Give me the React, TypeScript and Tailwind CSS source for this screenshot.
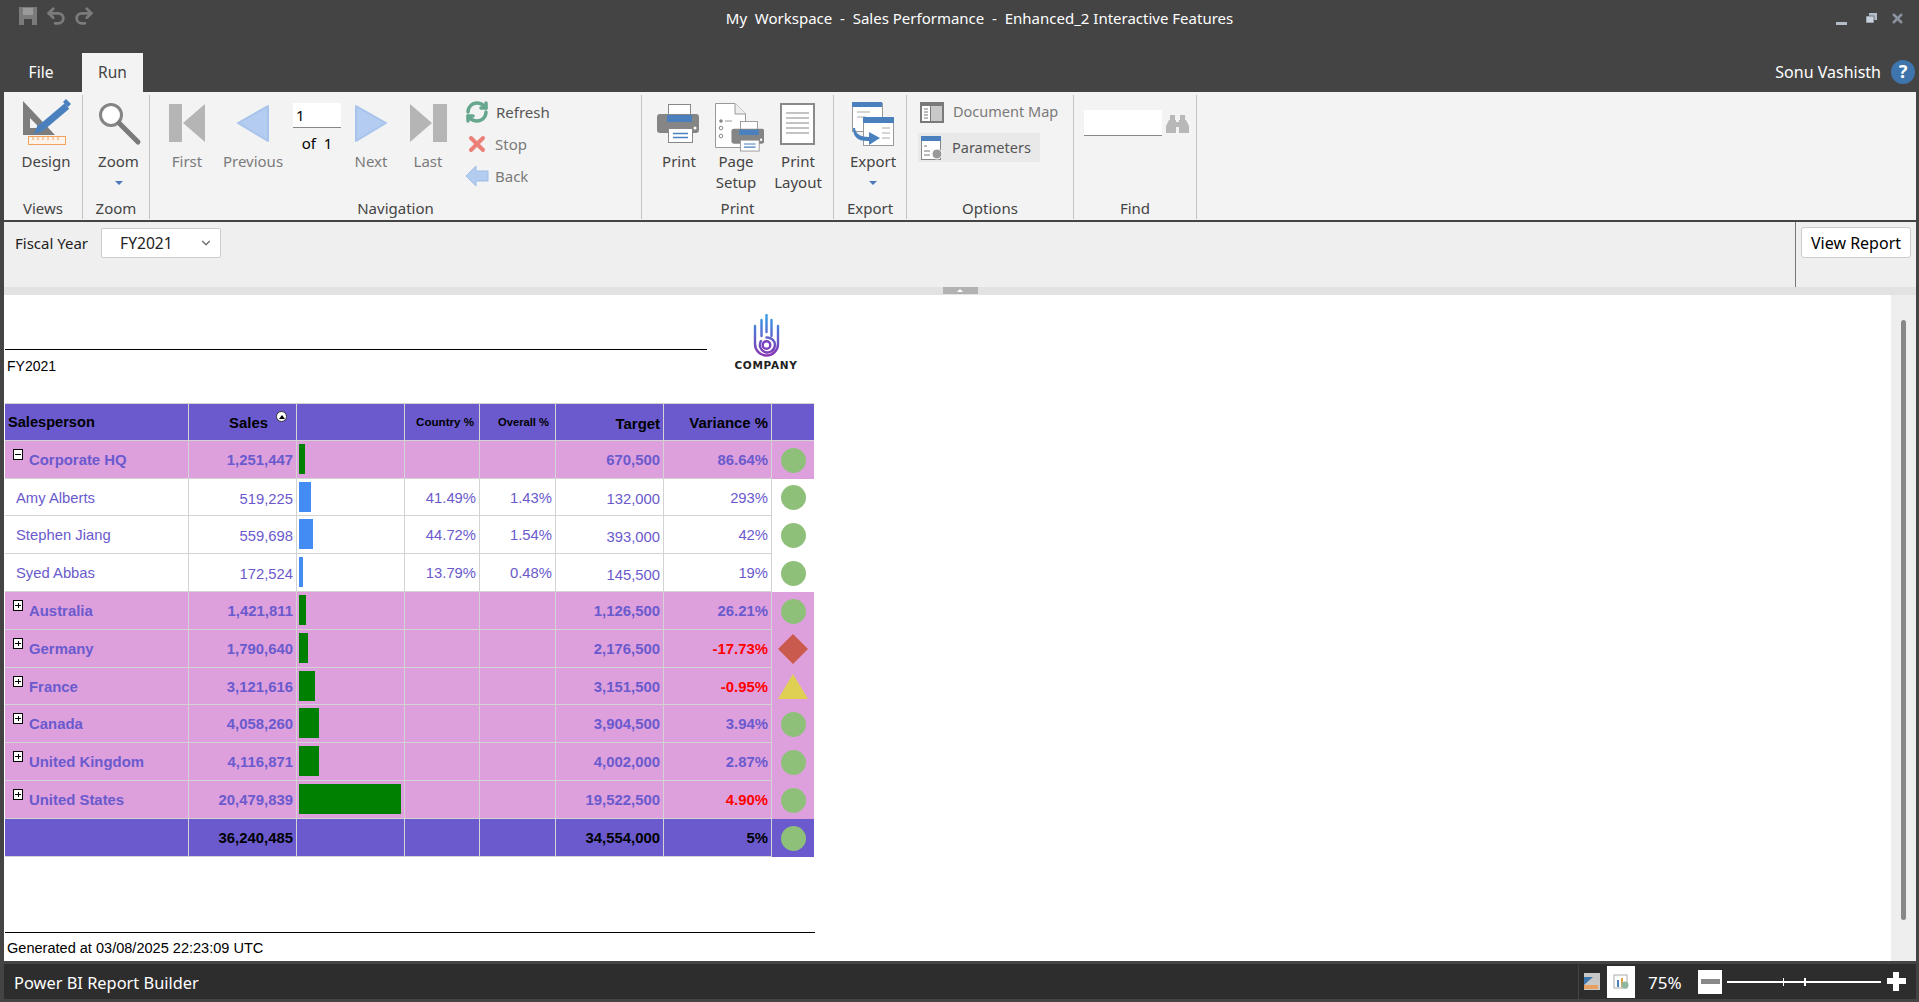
import React from "react";
import { RefreshCw, X, Undo2, Redo2, ChevronDown } from "lucide-react";

const blue = "#4a80bd";
const gridCols = "grid grid-cols-[184px_108px_108px_75px_76px_108px_108px_42px]";
const cell = "flex items-center justify-end pr-[3px] pt-[2px] border-r border-b border-[#d3d3d3]";

type Shape = "circle" | "diamond" | "triangle";
type Region = {
  name: string;
  sales: string;
  bar: number;
  target: string;
  variance: string;
  red?: boolean;
  shape: Shape;
  h: string;
};

const regions: Region[] = [
  { name: "Australia", sales: "1,421,811", bar: 7, target: "1,126,500", variance: "26.21%", shape: "circle", h: "h-[38px]" },
  { name: "Germany", sales: "1,790,640", bar: 9, target: "2,176,500", variance: "-17.73%", red: true, shape: "diamond", h: "h-[38px]" },
  { name: "France", sales: "3,121,616", bar: 16, target: "3,151,500", variance: "-0.95%", red: true, shape: "triangle", h: "h-[37px]" },
  { name: "Canada", sales: "4,058,260", bar: 20, target: "3,904,500", variance: "3.94%", shape: "circle", h: "h-[38px]" },
  { name: "United Kingdom", sales: "4,116,871", bar: 20, target: "4,002,000", variance: "2.87%", shape: "circle", h: "h-[38px]" },
  { name: "United States", sales: "20,479,839", bar: 102, target: "19,522,500", variance: "4.90%", red: true, shape: "circle", h: "h-[38px]" },
];

const people = [
  { name: "Amy Alberts", sales: "519,225", bar: 12, country: "41.49%", overall: "1.43%", target: "132,000", variance: "293%", h: "h-[37px]" },
  { name: "Stephen Jiang", sales: "559,698", bar: 14, country: "44.72%", overall: "1.54%", target: "393,000", variance: "42%", h: "h-[38px]" },
  { name: "Syed Abbas", sales: "172,524", bar: 4, country: "13.79%", overall: "0.48%", target: "145,500", variance: "19%", h: "h-[38px]" },
];

function Status({ shape }: { shape: Shape }) {
  if (shape === "circle") return <div className="w-[25px] h-[25px] rounded-full bg-[#8fc07a]" />;
  return (
    <svg width="30" height="30" viewBox="0 0 30 30">
      {shape === "diamond" ? (
        <polygon points="15,0 30,15 15,30 0,15" fill="#cb5a4e" />
      ) : (
        <polygon points="15,2 30,27 0,27" fill="#dfcf52" />
      )}
    </svg>
  );
}

function Bar({ width, color }: { width: number; color: string }) {
  return (
    <div className="flex items-start pl-[2px] pt-[3px] border-r border-b border-[#d3d3d3]">
      <div className={`h-[30px] ${color}`} style={{ width }} />
    </div>
  );
}

function TreeBox({ open }: { open?: boolean }) {
  return (
    <div className="relative w-[10px] h-[11px] mt-[8px] shrink-0 bg-white border border-black">
      <div className="absolute left-[1px] right-[1px] top-[4px] h-px bg-black" />
      {!open && <div className="absolute top-[2px] bottom-[2px] left-[3.5px] w-px bg-black" />}
    </div>
  );
}

function GroupRow({ r, open }: { r: Region; open?: boolean }) {
  return (
    <div className={`${gridCols} ${r.h} bg-[#dda0dd] font-bold text-[#6a5acd]`}>
      <div className="flex items-start pl-[8px] border-r border-b border-[#d3d3d3]">
        <TreeBox open={open} />
        <span className="ml-[6px] pt-[2px] self-center">{r.name}</span>
      </div>
      <div className={cell}>{r.sales}</div>
      <Bar width={r.bar} color="bg-[#008000]" />
      <div className={cell} />
      <div className={cell} />
      <div className={cell}>{r.target}</div>
      <div className={`${cell} ${r.red ? "text-[#ff0000]" : ""}`}>{r.variance}</div>
      <div className="flex items-center justify-center">
        <Status shape={r.shape} />
      </div>
    </div>
  );
}

function ReportTable() {
  return (
    <div className="w-[809px] text-[14.9px] font-['Liberation_Sans',sans-serif]">
      <div className={`${gridCols} h-[38px] bg-[#6a5acd] border-t border-[#d3d3d3] font-bold text-black`}>
        <div className="flex items-center pl-[3px] pt-[2px] border-r border-b border-[#d3d3d3] text-[14.6px]">Salesperson</div>
        <div className={`${cell} relative pr-[28px]`}>
          Sales
          <div className="absolute top-[7px] right-[9px] w-[11px] h-[11px] rounded-full bg-white border border-[#333] flex items-center justify-center">
            <div className="w-0 h-0 border-x-[3px] border-x-transparent border-b-[4px] border-b-black" />
          </div>
        </div>
        <div className={cell} />
        <div className="flex items-center justify-end pr-[5px] border-r border-b border-[#d3d3d3] text-[11.6px]">Country %</div>
        <div className="flex items-center justify-end pr-[6px] border-r border-b border-[#d3d3d3] text-[11.2px]">Overall %</div>
        <div className={`${cell} pt-[4px]`}>Target</div>
        <div className={cell}>Variance %</div>
        <div className="border-b border-[#d3d3d3]" />
      </div>

      <GroupRow
        open
        r={{ name: "Corporate HQ", sales: "1,251,447", bar: 6, target: "670,500", variance: "86.64%", shape: "circle", h: "h-[38px]" }}
      />

      {people.map((p) => (
        <div key={p.name} className={`${gridCols} ${p.h} bg-white text-[#6a5acd] text-[14.8px]`}>
          <div className="flex items-center pl-[11px] pt-[2px] border-r border-b border-[#d3d3d3]">{p.name}</div>
          <div className={`${cell} pt-[4px]`}>{p.sales}</div>
          <Bar width={p.bar} color="bg-[#428cf4]" />
          <div className={cell}>{p.country}</div>
          <div className={cell}>{p.overall}</div>
          <div className={`${cell} pt-[5px]`}>{p.target}</div>
          <div className={cell}>{p.variance}</div>
          <div className="flex items-center justify-center">
            <Status shape="circle" />
          </div>
        </div>
      ))}

      {regions.map((r) => (
        <GroupRow key={r.name} r={r} />
      ))}

      <div className={`${gridCols} h-[38px] bg-[#6a5acd] font-bold text-black`}>
        <div className={cell} />
        <div className={cell}>36,240,485</div>
        <div className={cell} />
        <div className={cell} />
        <div className={cell} />
        <div className={cell}>34,554,000</div>
        <div className={cell}>5%</div>
        <div className="flex items-center justify-center">
          <Status shape="circle" />
        </div>
      </div>
    </div>
  );
}

/* ribbon icons: all 58 high so the labels line up */
function DesignIcon() {
  return (
    <svg width="50" height="58" viewBox="0 0 50 58">
      <path d="M2 6 L34 40 H2 Z M9 23 V33 H19 Z" fill="#7d7d7d" fillRule="evenodd" />
      <path d="M46 11 L20 33" stroke={blue} strokeWidth="7" />
      <path d="M42 7 L45 4 L50 9 L47 12 Z" fill={blue} />
      <path d="M17 29 L22 36 L13 39 Z" fill={blue} />
      <rect x="7.5" y="41.5" width="37" height="8" fill="#fdf3e8" stroke="#f0a35e" />
      <path d="M12 42 V45 M17 42 V45 M22 42 V45 M27 42 V45 M32 42 V45 M37 42 V45" stroke="#f0a35e" />
    </svg>
  );
}

function ZoomIcon() {
  return (
    <svg width="50" height="58" viewBox="0 0 50 58">
      <circle cx="17" cy="20" r="10.5" fill="#fff" stroke="#858585" strokeWidth="3" />
      <path d="M25 28 L44 47" stroke="#7a7a7a" strokeWidth="5" strokeLinecap="round" />
    </svg>
  );
}

function PrinterParts() {
  return (
    <>
      <rect x="18.5" y="9.5" width="22" height="12" fill="#fff" stroke="#888" />
      <rect x="7" y="19" width="42" height="19" rx="3" fill="#858585" />
      <rect x="17" y="20" width="25" height="7" fill={blue} />
      <circle cx="45" cy="33" r="1.5" fill="#fff" />
      <rect x="18.5" y="33.5" width="24" height="14" fill="#fff" stroke="#888" />
      <path d="M23 38.5 H38 M23 42.5 H38" stroke={blue} strokeWidth="1.5" />
    </>
  );
}

function PrintIcon() {
  return (
    <svg width="58" height="58" viewBox="0 0 58 58">
      <PrinterParts />
    </svg>
  );
}

function PageSetupIcon() {
  return (
    <svg width="56" height="58" viewBox="0 0 56 58">
      <path d="M7.5 8.5 H27 L37.5 19 V52.5 H7.5 Z" fill="#fff" stroke="#999" />
      <path d="M27 8.5 V19 H37.5" fill="#eee" stroke="#999" />
      <circle cx="13" cy="26" r="1.8" fill="#888" />
      <path d="M17 26 H24" stroke="#999" />
      <circle cx="13" cy="33" r="1.8" fill="none" stroke="#888" />
      <circle cx="13" cy="41" r="1.8" fill="none" stroke="#888" />
      <g transform="translate(18 19) scale(0.78)">
        <PrinterParts />
      </g>
    </svg>
  );
}

function PrintLayoutIcon() {
  return (
    <svg width="68" height="58" viewBox="0 0 68 58">
      <rect x="17" y="9" width="33" height="40" fill="#fff" stroke="#8a8a8a" strokeWidth="2" />
      <path d="M22 18 H45 M22 23 H45 M22 28 H45 M22 33 H45 M22 38 H45" stroke="#b0b0b0" strokeWidth="1.5" />
    </svg>
  );
}

function ExportIcon() {
  return (
    <svg width="66" height="58" viewBox="0 0 66 58">
      <rect x="12.5" y="8.5" width="30" height="28" fill="#fff" stroke="#999" />
      <rect x="12" y="7" width="30" height="5" fill={blue} />
      <path d="M17 17 H30 M17 22 H26" stroke="#aaa" />
      <rect x="23.5" y="23.5" width="30" height="27" fill="#fff" stroke="#999" />
      <rect x="23" y="22" width="31" height="6" fill={blue} />
      <path d="M42 33 H50 M42 38 H50 M42 43 H50" stroke="#aaa" />
      <path d="M15 33 Q16 42 29 42 V37 L40 43 L29 50 V46 Q13 47 13 33 Z" fill={blue} />
    </svg>
  );
}

function BigButton({ label, w, icon, muted, arrow }: { label: React.ReactNode; w: string; icon: React.ReactNode; muted?: boolean; arrow?: boolean }) {
  return (
    <div className={`${w} shrink-0 flex flex-col items-center text-center leading-[21px] ${muted ? "text-[#7a7a7a]" : "text-[#444]"}`}>
      <div className="mb-[-2px]">{icon}</div>
      <div>{label}</div>
      {arrow && (
        <div className="h-[21px] flex items-center">
          <div className="w-0 h-0 border-x-[4px] border-x-transparent border-t-[4px] border-t-[#4a78b8]" />
        </div>
      )}
    </div>
  );
}

function Group({ title, w, children }: { title: string; w: string; children: React.ReactNode }) {
  return (
    <div className={`${w} h-[124px] flex flex-col border-r border-[#c4c4c4]`}>
      <div className="flex h-[99px]">{children}</div>
      <div className="h-[25px] pt-[3px] text-center leading-[22px] text-[#444]">{title}</div>
    </div>
  );
}

function SmallAction({ icon, label, className }: { icon: React.ReactNode; label: string; className: string }) {
  return (
    <div className="flex items-center h-[32px]">
      <div className="w-[24px] flex justify-center">{icon}</div>
      <span className={className}>{label}</span>
    </div>
  );
}

function Ribbon() {
  return (
    <div className="h-[130px] pt-[3px] bg-[#f3f3f3] border-b-2 border-[#444] flex text-[15px]">
      <Group title="Views" w="w-[79px]">
        <div className="pl-[4px]">
          <BigButton w="w-[76px]" label="Design" icon={<DesignIcon />} />
        </div>
      </Group>
      <Group title="Zoom" w="w-[67px]">
        <BigButton w="w-[71px]" label="Zoom" arrow icon={<ZoomIcon />} />
      </Group>
      <Group title="Navigation" w="w-[492px]">
        <div className="flex pl-[10px]">
          <BigButton
            w="w-[54px]"
            muted
            label="First"
            icon={
              <svg width="54" height="58" viewBox="0 0 54 58">
                <rect x="9" y="9" width="13" height="38" fill="#b5b5b5" />
                <polygon points="23,28 45,9 45,47" fill="#b5b5b5" />
              </svg>
            }
          />
          <BigButton
            w="w-[78px]"
            muted
            label="Previous"
            icon={
              <svg width="78" height="58" viewBox="0 0 78 58">
                <polygon points="24,28 54,11 54,46" fill="#b4ccef" stroke="#a8c4ec" strokeWidth="2" strokeLinejoin="round" />
              </svg>
            }
          />
          <div className="w-[50px] flex flex-col items-center pt-[8px] text-black">
            <div className="w-[48px] h-[25px] pl-[3px] bg-white border-b border-[#888] leading-[24px]">1</div>
            <div className="mt-[4px] whitespace-pre">of  1</div>
          </div>
          <BigButton
            w="w-[58px]"
            muted
            label="Next"
            icon={
              <svg width="58" height="58" viewBox="0 0 58 58">
                <polygon points="14,11 14,46 44,28" fill="#b4ccef" stroke="#a8c4ec" strokeWidth="2" strokeLinejoin="round" />
              </svg>
            }
          />
          <BigButton
            w="w-[56px]"
            muted
            label="Last"
            icon={
              <svg width="56" height="58" viewBox="0 0 56 58">
                <polygon points="10,9 32,28 10,47" fill="#b5b5b5" />
                <rect x="33" y="9" width="14" height="38" fill="#b5b5b5" />
              </svg>
            }
          />
          <div className="pl-[9px] pt-[1px]">
            <SmallAction
              icon={<RefreshCw size={24} strokeWidth={3.5} color="#66a78e" />}
              label="Refresh"
              className="ml-[7px] text-[#555]"
            />
            <SmallAction
              icon={<X size={24} strokeWidth={4} color="#ea8078" />}
              label="Stop"
              className="ml-[6px] text-[#7a7a7a]"
            />
            <SmallAction
              icon={
                <svg width="24" height="22" viewBox="0 0 24 22">
                  <polygon points="1,11 11,1 11,6 23,6 23,16 11,16 11,21" fill="#b4ccef" stroke="#9dbde8" />
                </svg>
              }
              label="Back"
              className="ml-[6px] text-[#7a7a7a]"
            />
          </div>
        </div>
      </Group>
      <Group title="Print" w="w-[192px]">
        <div className="flex pl-[8px]">
          <BigButton w="w-[58px]" label="Print" icon={<PrintIcon />} />
          <BigButton w="w-[56px]" label={<>Page<br />Setup</>} icon={<PageSetupIcon />} />
          <BigButton w="w-[68px]" label={<>Print<br />Layout</>} icon={<PrintLayoutIcon />} />
        </div>
      </Group>
      <Group title="Export" w="w-[73px]">
        <BigButton w="w-[78px]" label="Export" arrow icon={<ExportIcon />} />
      </Group>
      <Group title="Options" w="w-[167px]">
        <div className="pt-[2px] text-[14.5px]">
          <div className="flex items-center h-[30px] pl-[13px] text-[#7a7a7a]">
            <svg width="24" height="21" viewBox="0 0 24 21">
              <rect x="0" y="0" width="24" height="21" fill="#7a7a7a" />
              <rect x="2" y="4" width="8" height="15" fill="#fff" />
              <rect x="11" y="4" width="11" height="15" fill="#c8c8c8" />
              <path d="M4 7 H8 M4 10 H8 M4 13 H8 M4 16 H8" stroke="#777" />
            </svg>
            <span className="ml-[9px]">Document Map</span>
          </div>
          <div className="mt-[6px] ml-[11px] w-[122px] h-[29px] flex items-center pl-[3px] bg-[#e9e9e9] text-[#555]">
            <svg width="22" height="24" viewBox="0 0 22 24">
              <rect x="0.5" y="0.5" width="19" height="23" fill="#fff" stroke="#888" />
              <rect x="0" y="0" width="20" height="5" fill={blue} />
              <path d="M3 10 H6 M3 15 H9 M3 19 H9" stroke="#777" />
              <circle cx="16" cy="18" r="5" fill="#999" stroke="#fff" />
            </svg>
            <span className="ml-[9px]">Parameters</span>
          </div>
        </div>
      </Group>
      <Group title="Find" w="w-[123px]">
        <div className="flex items-start pl-[10px] pt-[15px]">
          <div className="w-[78px] h-[26px] bg-white border-b border-[#888]" />
          <svg className="ml-[4px] mt-[4px]" width="23" height="20" viewBox="0 0 23 20">
            <rect x="4" y="1" width="5" height="6" fill="#b8b8b8" />
            <rect x="14" y="1" width="5" height="6" fill="#b8b8b8" />
            <path d="M3 6 H10 V19 H0 V12 Z M13 6 H20 L23 12 V19 H13 Z" fill="#b8b8b8" />
            <rect x="10" y="8" width="3" height="5" fill="#b8b8b8" />
          </svg>
        </div>
      </Group>
    </div>
  );
}

function Logo() {
  return (
    <div className="ml-[26px] mt-[19px] w-[66px] flex flex-col items-center">
      <svg width="32" height="44" viewBox="0 0 32 44" fill="none" strokeWidth="2.4" strokeLinecap="round">
        <defs>
          <linearGradient id="hand" gradientUnits="userSpaceOnUse" x1="0" y1="0" x2="0" y2="44">
            <stop offset="0" stopColor="#2f9fe8" />
            <stop offset="1" stopColor="#8b2fb0" />
          </linearGradient>
        </defs>
        <g stroke="url(#hand)">
          <path d="M5 12 V30 A11.5 11.5 0 0 0 28 30 V12" />
          <path d="M11.5 6 V22" />
          <path d="M16.5 1 V18" />
          <path d="M21.5 6 V22" />
          <path d="M11 27 A7.5 7.5 0 1 0 16.5 23.5" />
        </g>
        <circle cx="16.5" cy="31" r="3.8" stroke="#7b3fc0" />
      </svg>
      <div className="mt-[1px] text-[10.5px] leading-[12px] tracking-[0.7px] font-bold text-[#222] font-['DejaVu_Sans',sans-serif]">COMPANY</div>
    </div>
  );
}

export default function App() {
  return (
    <div className="w-[1919px] h-[1002px] overflow-hidden bg-[#444] flex flex-col font-['Noto_Sans',sans-serif]">
      {/* title bar */}
      <div className="h-[53px] flex items-start">
        <div className="w-[130px] flex items-center pt-[5px] pl-[18px] text-[#7b7b7b]">
          <svg width="20" height="20" viewBox="0 0 20 20">
            <path d="M1 1 H19 V19 H1 Z" fill="#7b7b7b" />
            <rect x="5" y="2" width="10" height="7" fill="#9a9a9a" />
            <rect x="6" y="13" width="8" height="6" fill="#444" />
          </svg>
          <Undo2 className="ml-[7px]" size={22} strokeWidth={3} />
          <Redo2 className="ml-[6px]" size={22} strokeWidth={3} />
        </div>
        <div className="flex-1 pt-[8px] text-center text-[15px] leading-[20px] text-white whitespace-pre">
          My  Workspace  -  Sales Performance  -  Enhanced_2 Interactive Features
        </div>
        <div className="w-[90px] flex items-center justify-end pt-[11px] pr-[14px] text-[#a6aebc]">
          <div className="mt-[10px] w-[11px] h-[3px] bg-[#b4bcc8]" />
          <svg className="ml-[19px]" width="11" height="11" viewBox="0 0 11 11">
            <rect x="3" y="0" width="8" height="7" fill="#b4bcc8" />
            <rect x="0" y="3" width="8" height="7" fill="#c8d0dc" stroke="#444" strokeWidth="0.6" />
          </svg>
          <X className="ml-[13px]" size={15} strokeWidth={4} color="#8b93a0" />
        </div>
      </div>

      {/* tabs */}
      <div className="h-[39px] flex items-stretch text-[15.5px]">
        <div className="w-[82px] pt-[8px] text-center text-white">File</div>
        <div className="w-[61px] pt-[8px] text-center bg-[#f3f3f3] text-[#444]">Run</div>
        <div className="flex-1 flex items-center justify-end pr-[4px] pb-[2px]">
          <span className="text-white text-[16px]">Sonu Vashisth</span>
          <div className="ml-[10px] w-[24px] h-[24px] rounded-full bg-[#3e75ad] text-white font-bold text-[18px] flex items-center justify-center">?</div>
        </div>
      </div>

      <div className="flex-1 flex flex-col pl-[4px] pr-[3px] min-h-0">
        <Ribbon />

        {/* parameters */}
        <div className="h-[65px] flex bg-[#efefef] text-[15px] text-[#222]">
          <div className="flex-1 flex items-start pl-[11px] pt-[6px]">
            <span className="leading-[30px]">Fiscal Year</span>
            <div className="ml-[13px] w-[120px] h-[30px] flex items-center justify-between pl-[18px] pr-[7px] bg-white border border-[#ccc] rounded-[2px] text-[15.6px]">
              <span className="pt-[2px]">FY2021</span>
              <ChevronDown size={14} color="#666" />
            </div>
          </div>
          <div className="w-[121px] pl-[5px] pt-[5px] border-l border-[#777]">
            <div className="w-[110px] h-[31px] flex items-center justify-center bg-white border border-[#ccc] rounded-[3px] text-black text-[16px]">View Report</div>
          </div>
        </div>

        {/* splitter */}
        <div className="h-[8px] flex justify-center bg-[#e2e2e2]">
          <div className="w-[35px] h-[7px] flex items-center justify-center bg-[#b2b2b2]">
            <div className="w-0 h-0 border-x-[3px] border-x-transparent border-b-[3px] border-b-white" />
          </div>
        </div>

        {/* report */}
        <div className="h-[666px] flex bg-white">
          <div className="flex-1 flex flex-col pl-px">
            <div className="h-[108px] flex">
              <div className="w-[702px] pt-[54px]">
                <div className="pl-[2px] pt-[7px] border-t border-black text-[14px] leading-[18px] text-black font-['Liberation_Sans',sans-serif]">FY2021</div>
              </div>
              <Logo />
            </div>
            <ReportTable />
            <div className="mt-auto w-[810px] h-[29px] pl-[2px] pt-px border-t border-black text-[14.55px] leading-[28px] text-black font-['Liberation_Sans',sans-serif]">
              Generated at 03/08/2025 22:23:09 UTC
            </div>
          </div>
          <div className="w-[25px] bg-[#eee] pt-[25px] flex justify-center">
            <div className="w-[5px] h-[600px] rounded-full bg-[#888]" />
          </div>
        </div>

        {/* status bar */}
        <div className="mt-[3px] mb-[3px] h-[35px] flex items-center bg-[#2d2d2d] text-white">
          <div className="pl-[10px] pt-[4px] text-[16.4px]">Power BI Report Builder</div>
          <div className="ml-auto flex items-center pr-[10px]">
            <div className="h-[34px] flex items-center pl-[5px] border-l border-[#444]">
              <svg width="16" height="17" viewBox="0 0 16 17">
                <rect x="0" y="0" width="16" height="17" fill="#c8c8c8" />
                <polygon points="0,4 9,4 0,12" fill="#3e75ad" />
                <rect x="0" y="12" width="14" height="4" fill="#e8a060" />
              </svg>
              <div className="ml-[7px] w-[28px] h-[32px] flex items-center justify-center bg-white">
                <svg width="16" height="16" viewBox="0 0 16 16">
                  <rect x="1" y="1" width="13" height="13" fill="none" stroke="#aaa" />
                  <rect x="4" y="6" width="2" height="7" fill="#4a80bd" />
                  <rect x="8" y="4" width="2" height="9" fill="#e0a050" />
                  <circle cx="12" cy="11" r="3.5" fill="#8fb8a0" />
                </svg>
              </div>
            </div>
            <span className="ml-[13px] w-[35px] pt-[2px] text-[17px]">75%</span>
            <div className="ml-[15px] w-[24px] h-[24px] flex items-center justify-center bg-white">
              <div className="w-[19px] h-[5px] bg-[#888]" />
            </div>
            <div className="relative ml-[5px] w-[154px] h-[2px] bg-white">
              <div className="absolute left-[56px] top-[-3px] w-px h-[8px] bg-white" />
              <div className="absolute left-[77px] top-[-3px] w-[2px] h-[8px] bg-white" />
            </div>
            <div className="relative ml-[6px] w-[19px] h-[19px]">
              <div className="absolute left-0 right-0 top-[6px] h-[6px] bg-white" />
              <div className="absolute top-0 bottom-0 left-[6px] w-[6px] bg-white" />
            </div>
          </div>
        </div>
      </div>
    </div>
  );
}
